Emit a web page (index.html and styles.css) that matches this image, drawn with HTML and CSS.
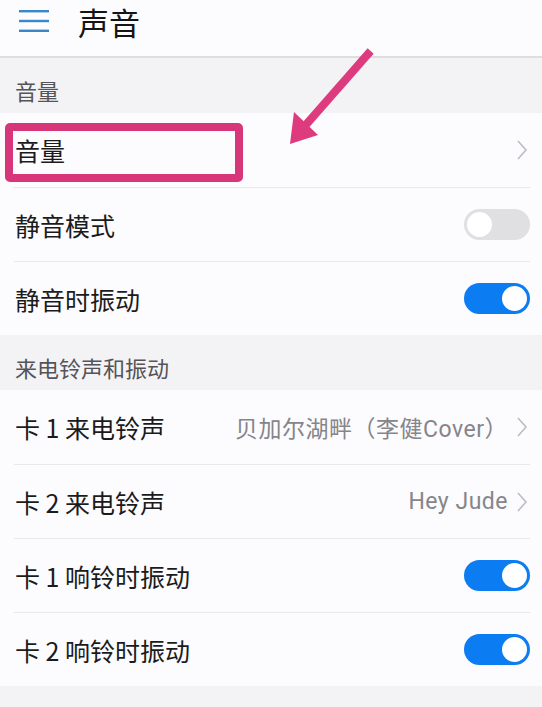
FILE: index.html
```html
<!DOCTYPE html>
<html lang="zh-CN">
<head>
  <meta charset="UTF-8" />
  <meta name="viewport" content="width=device-width, initial-scale=1.0"/>
  <title>声音</title>
  <link rel="stylesheet" href="styles.css">
</head>
<body>
  <div class="screen">
    <div class="topbar">
      <svg class="menu-icon" width="30" height="22" viewBox="0 0 30 22">
        <rect x="0" y="0" width="30" height="2.4" fill="#3b86c6"/>
        <rect x="0" y="9.8" width="30" height="2.4" fill="#3b86c6"/>
        <rect x="0" y="19.6" width="30" height="2.4" fill="#3b86c6"/>
      </svg>
      <h1>声音</h1>
    </div>

    <div class="group-title">音量</div>
    <div class="group">
      <div class="row">
        <span class="label">音量</span>
        <svg class="chev" width="12" height="22" viewBox="0 0 12 22"><polyline points="2,2 10,11 2,20" fill="none" stroke="#bdbcc0" stroke-width="1.6"/></svg>
      </div>
      <div class="row">
        <span class="label">静音模式</span>
        <span class="switch"></span>
      </div>
      <div class="row">
        <span class="label">静音时振动</span>
        <span class="switch on"></span>
      </div>
    </div>

    <div class="group-title">来电铃声和振动</div>
    <div class="group">
      <div class="row">
        <span class="label">卡 1 来电铃声</span>
        <span class="value">贝加尔湖畔（李健Cover）</span>
        <svg class="chev" width="12" height="22" viewBox="0 0 12 22"><polyline points="2,2 10,11 2,20" fill="none" stroke="#bdbcc0" stroke-width="1.6"/></svg>
      </div>
      <div class="row">
        <span class="label">卡 2 来电铃声</span>
        <span class="value">Hey Jude</span>
        <svg class="chev" width="12" height="22" viewBox="0 0 12 22"><polyline points="2,2 10,11 2,20" fill="none" stroke="#bdbcc0" stroke-width="1.6"/></svg>
      </div>
      <div class="row">
        <span class="label">卡 1 响铃时振动</span>
        <span class="switch on"></span>
      </div>
      <div class="row">
        <span class="label">卡 2 响铃时振动</span>
        <span class="switch on"></span>
      </div>
    </div>

    <div class="group-title">其他</div>

    <!-- annotation drawn over the screenshot -->
    <div class="callout-box"></div>
    <svg class="callout-arrow" width="542" height="707" viewBox="0 0 542 707">
      <line x1="368" y1="54" x2="304" y2="127" stroke="#de3a7e" stroke-width="8" stroke-linecap="square"/>
      <polygon points="290,144 294,112 318,135" fill="#de3a7e"/>
    </svg>
  </div>
</body>
</html>
```

FILE: styles.css
```css
* {
  box-sizing: border-box;
}

html, body {
  margin: 0;
  background: #f3f2f5;
}

body {
  font-family: "Noto Sans CJK SC", "Noto Sans", Roboto, sans-serif;
  color: #1b1b1b;
}

.screen {
  position: relative;
  width: 542px;
  height: 707px;
  overflow: hidden;
  background: #f3f2f5;
}

.topbar {
  height: 58px;
  display: flex;
  align-items: center;
  padding: 0 0 2px 19px;
  background: #fcfbfe;
  border-bottom: 2px solid #dedde0;
}

.menu-icon {
  margin-top: -12px;
}

.topbar h1 {
  margin: 0 0 0 29px;
  margin-top: -12px;
  font-size: 31px;
  font-weight: normal;
  color: #151515;
}

.group-title {
  height: 55px;
  display: flex;
  align-items: center;
  padding: 8px 15px 0;
  font-size: 22px;
  color: #555458;
}

.group {
  background: #fcfbfe;
  padding: 0 12px 0 14px;
}

.row {
  height: 74px;
  display: flex;
  align-items: center;
  padding-left: 1px;
}

.row + .row {
  border-top: 1px solid #e9e8eb;
}

.label {
  flex: 1;
  font-size: 25px;
  color: #1b1b1b;
}

.value {
  font-family: Roboto, "Noto Sans CJK SC", sans-serif;
  font-size: 23px;
  letter-spacing: 0.5px;
  color: #86858a;
  margin-right: 8px;
}

.chev {
  margin-right: 2px;
}

.switch {
  position: relative;
  width: 66px;
  height: 31px;
  border-radius: 16px;
  background: #e0dfe2;
}

.switch::after {
  content: "";
  position: absolute;
  top: 3px;
  left: 3px;
  width: 25px;
  height: 25px;
  border-radius: 50%;
  background: #fff;
}

.switch.on {
  background: #0c7cf2;
}

.switch.on::after {
  left: 38px;
}

.callout-box {
  position: absolute;
  left: 5px;
  top: 123px;
  width: 238px;
  height: 59px;
  border: 8px solid #d8367a;
  border-radius: 5px;
}

.callout-arrow {
  position: absolute;
  left: 0;
  top: 0;
}
```
